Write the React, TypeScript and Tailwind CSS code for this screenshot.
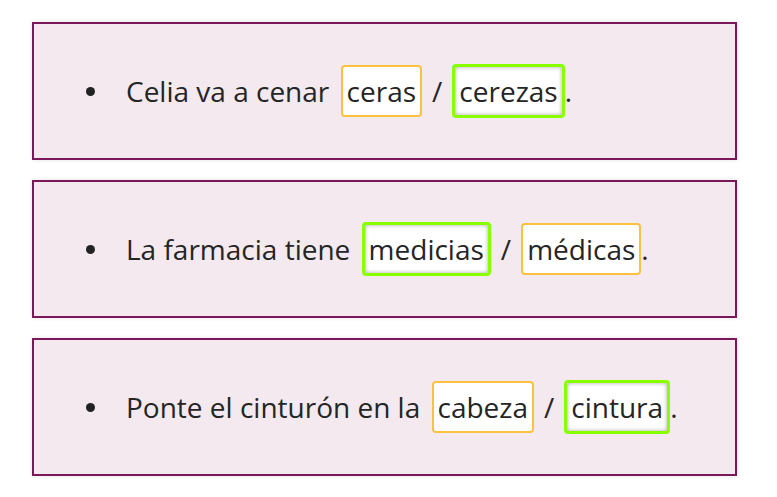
import React from "react";

type Opt = { text: string; correct: boolean };

interface Item {
  before: string;
  options: [Opt, Opt];
}

const items: Item[] = [
  {
    before: "Celia va a cenar",
    options: [
      { text: "ceras", correct: false },
      { text: "cerezas", correct: true },
    ],
  },
  {
    before: "La farmacia tiene",
    options: [
      { text: "medicias", correct: true },
      { text: "médicas", correct: false },
    ],
  },
  {
    before: "Ponte el cinturón en la",
    options: [
      { text: "cabeza", correct: false },
      { text: "cintura", correct: true },
    ],
  },
];

function Choice({ opt }: { opt: Opt }) {
  if (opt.correct) {
    return (
      <span className="inline-block rounded-[4px] border-[3px] border-[#8aff00] bg-white px-[4px] py-[6px] leading-[36px] shadow-[inset_0_0_4px_rgba(0,0,0,0.35)]">
        {opt.text}
      </span>
    );
  }
  return (
    <span className="inline-block rounded-[4px] border-2 border-[#fcc13d] bg-white px-[4px] py-[6px] leading-[36px]">
      {opt.text}
    </span>
  );
}

export default function App() {
  return (
    <div
      className="flex flex-col gap-5 bg-white pl-8 pr-10 pt-[22px] pb-5 text-[28px] text-[#252525]"
      style={{ fontFamily: '"Open Sans", "Noto Sans", sans-serif' }}
    >
      {items.map((item, i) => (
        <div
          key={i}
          className="flex h-[138px] items-center border-2 border-[#7b1859] bg-[#f3e9ef] pl-[52px] shadow-[0_0_4px_rgba(0,0,0,0.12)]"
        >
          <span className="mr-[31px] h-[9px] w-[9px] rounded-full bg-[#222]" />
          <span className="flex items-center whitespace-pre">
            <span className="mr-[4px]">{item.before + " "}</span>
            <Choice opt={item.options[0]} />
            <span className="px-[10px]">/</span>
            <Choice opt={item.options[1]} />
            .
          </span>
        </div>
      ))}
    </div>
  );
}
